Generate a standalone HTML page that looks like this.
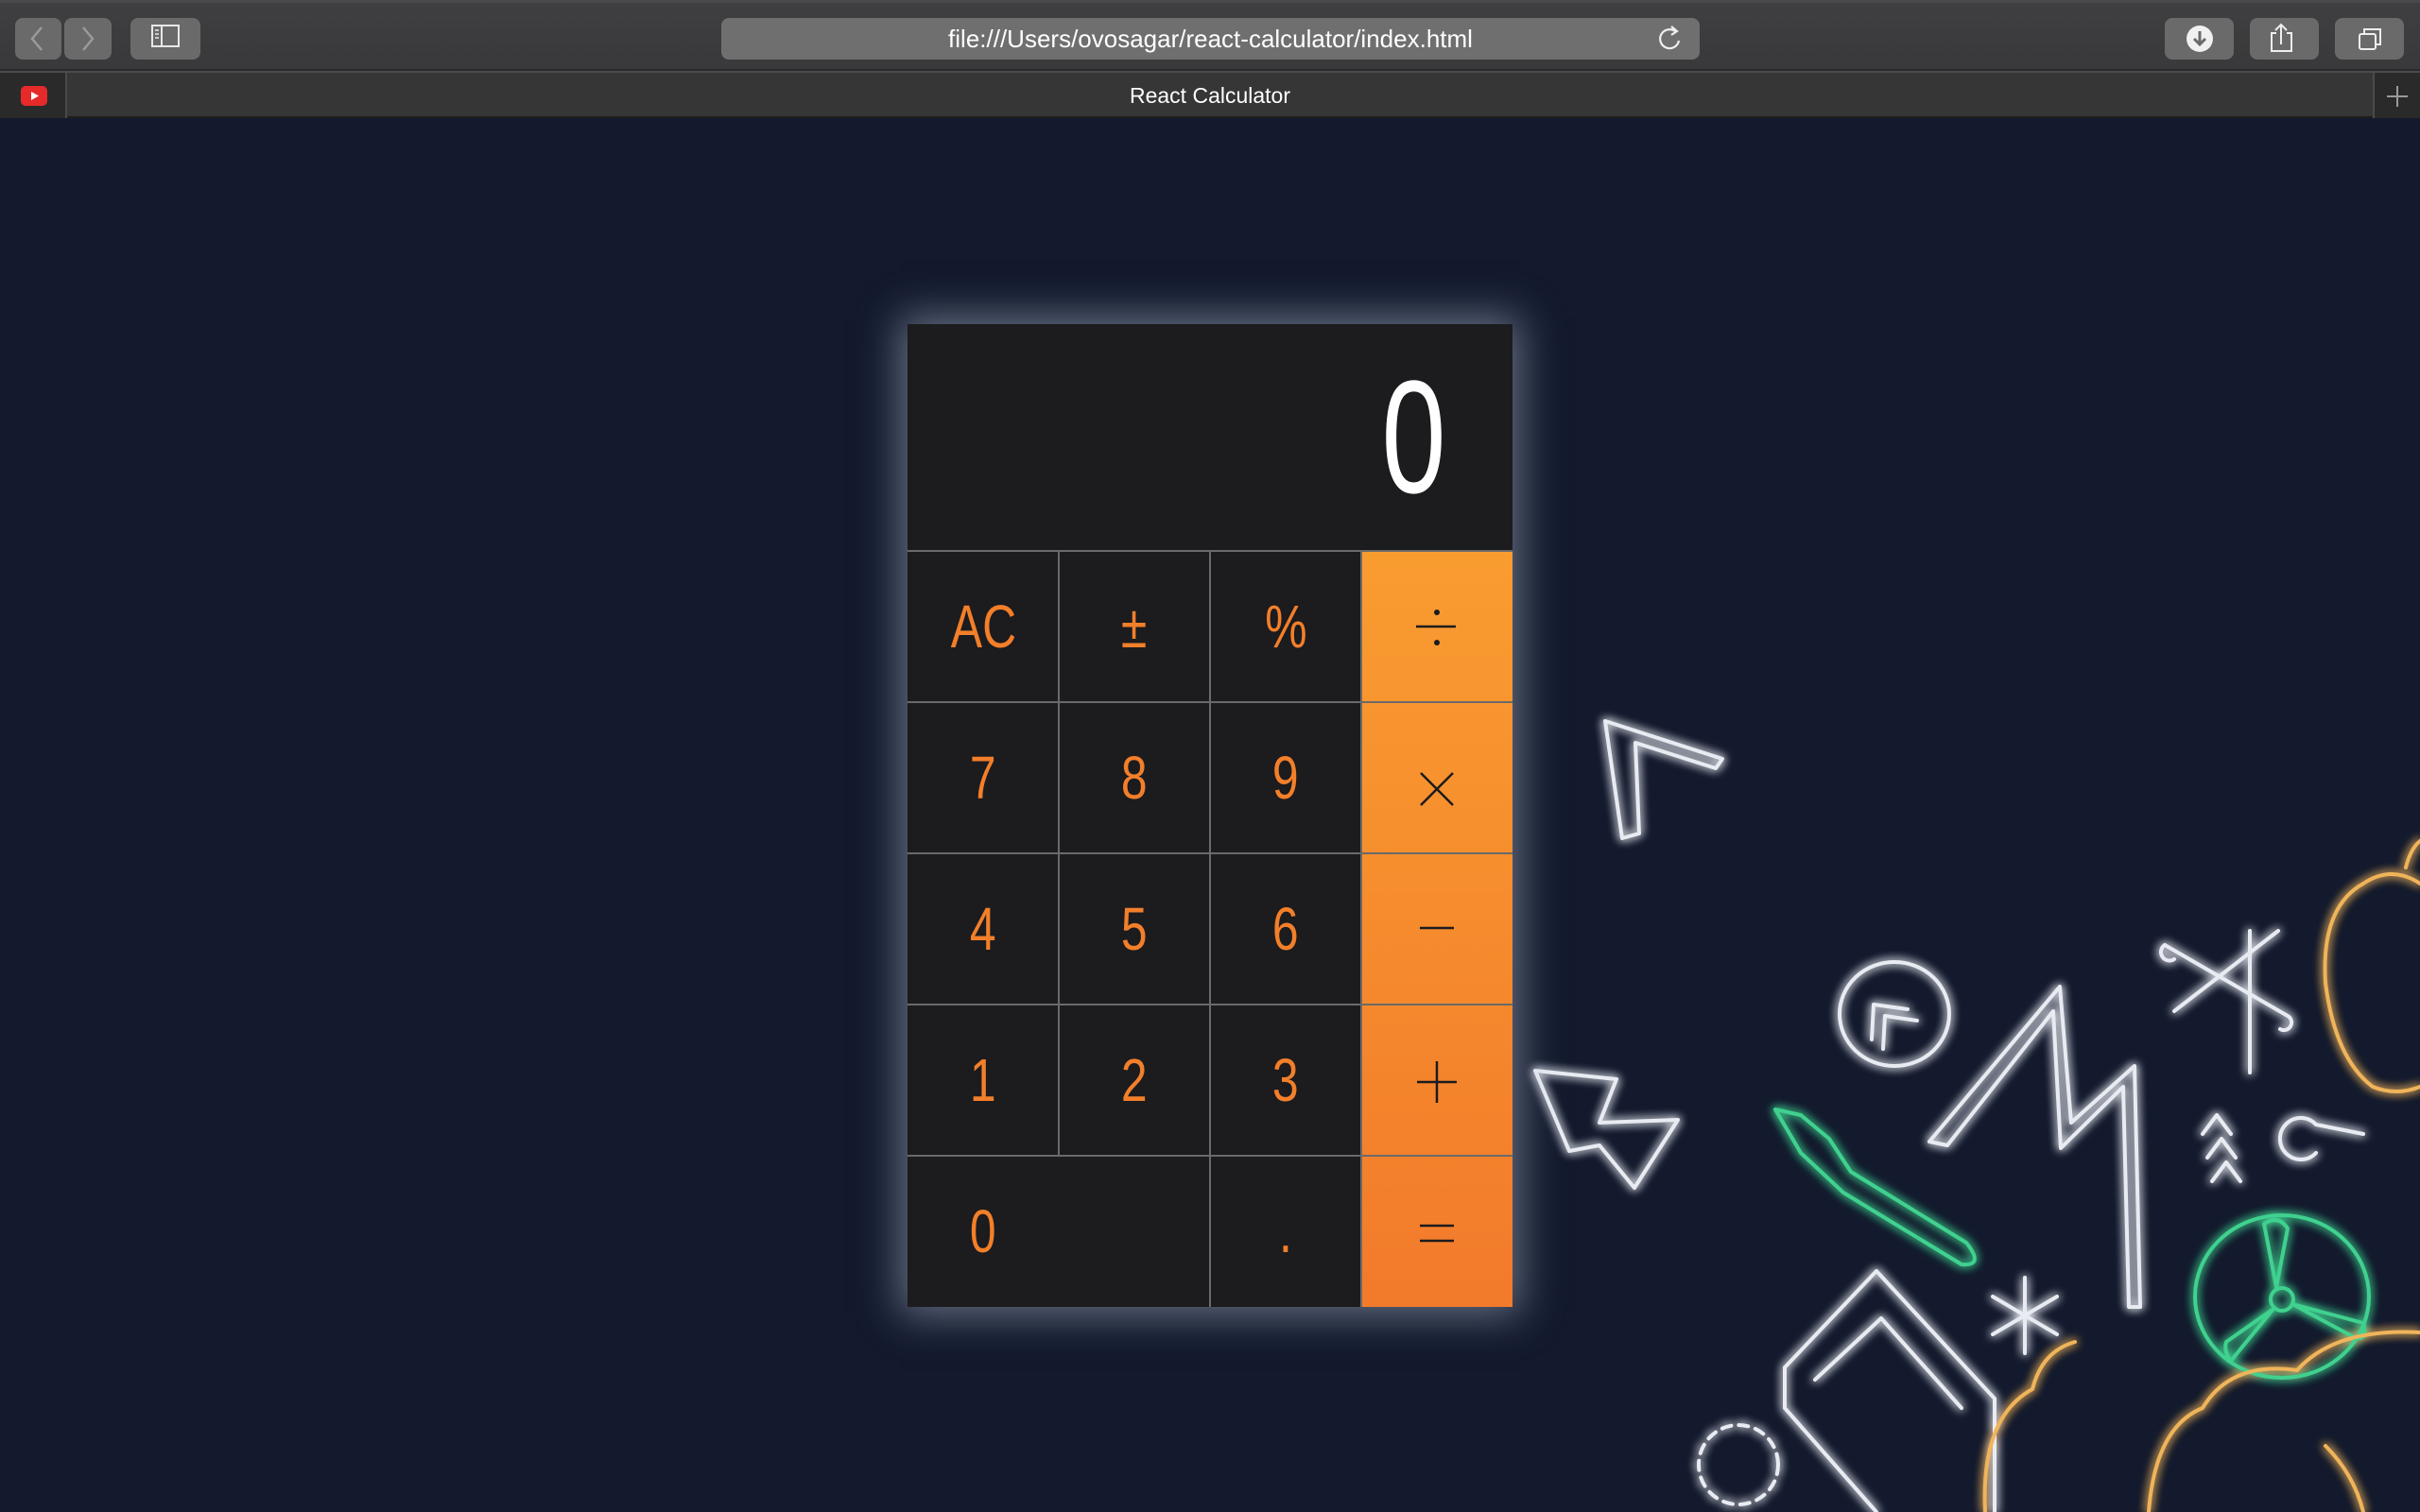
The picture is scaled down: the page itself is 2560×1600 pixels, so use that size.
<!DOCTYPE html>
<html><head><meta charset="utf-8"><style>
*{margin:0;padding:0;box-sizing:border-box}
html,body{width:2560px;height:1600px;overflow:hidden;background:#131a2d;font-family:"Liberation Sans",sans-serif}
.tb{position:absolute;left:0;top:0;width:2560px;height:75px;background:linear-gradient(#3f3f41,#39393b);border-top:3px solid #4a4a4c;border-bottom:2px solid #2a2a2a}
.btn{position:absolute;top:16px;height:44px;background:#6a6a6a;border-radius:8px}
.url{position:absolute;left:763px;top:16px;width:1035px;height:44px;background:#6f6f6f;border-radius:8px;color:#fff;font-size:26px;text-align:center;line-height:44px}
.tabs{position:absolute;left:0;top:75px;width:2560px;height:50px;background:#363637;border-top:2px solid #4c4c4c;border-bottom:2px solid #1e1e1e}
.tabl{position:absolute;left:0;top:0;width:71px;height:48px;background:#2a2a2b;border-right:2px solid #4a4a4a}
.tabr{position:absolute;right:0;top:0;width:50px;height:48px;background:#2a2a2b;border-left:2px solid #4a4a4a}
.title{position:absolute;left:0;width:2560px;top:0;line-height:48px;text-align:center;color:#fff;font-size:23px}
.calc{position:absolute;left:960px;top:343px;width:640px;height:1040px;background:#1c1b1e;box-shadow:0 0 40px 8px rgba(170,180,200,.55)}
.disp{position:absolute;left:0;top:0;width:640px;height:240px;color:#fff;font-size:170px;text-align:right;padding-right:70px;line-height:240px}
.disp span{display:inline-block;transform:scaleX(.72);transform-origin:right center}
.k{position:absolute;width:160px;height:160px;color:#f27f2a;font-size:64px;text-align:center;line-height:160px}
.k span{display:inline-block;transform:scaleX(.78)}
.ops{position:absolute;left:480px;top:240px;width:160px;height:800px;background:linear-gradient(#f99c30,#f27a2b)}
.gl{position:absolute;background:#6a6a6a}
</style></head><body>
<div class="tb">
 <div class="btn" style="left:16px;width:49px"></div>
 <div class="btn" style="left:68px;width:50px"></div>
 <div class="btn" style="left:138px;width:74px"></div>
 <svg style="position:absolute;left:0;top:0" width="260" height="75">
  <path d="M44 26 L34 38 L44 50" stroke="#9a9a9a" stroke-width="2.5" fill="none"/>
  <path d="M88 26 L98 38 L88 50" stroke="#9a9a9a" stroke-width="2.5" fill="none"/>
  <rect x="161" y="24" width="28" height="22" stroke="#e8e8e8" stroke-width="2" fill="none"/>
  <line x1="171" y1="24" x2="171" y2="46" stroke="#e8e8e8" stroke-width="2"/>
  <path d="M164 29h4M164 33h4M164 37h4" stroke="#e8e8e8" stroke-width="1.5"/>
 </svg>
 <div class="url">file:///Users/ovosagar/react-calculator/index.html</div>
 <svg style="position:absolute;left:1752px;top:22px" width="30" height="32"><path d="M20 8 A10 10 0 1 0 24 18" stroke="#eee" stroke-width="2.2" fill="none"/><path d="M16 3 L22 8 L16 12" stroke="#eee" stroke-width="2.2" fill="none"/></svg>
 <div class="btn" style="left:2290px;width:73px"></div>
 <div class="btn" style="left:2380px;width:73px"></div>
 <div class="btn" style="left:2470px;width:73px"></div>
 <svg style="position:absolute;left:2280px;top:0" width="280" height="75">
  <circle cx="47" cy="38" r="14" fill="#f0f0f0"/><path d="M47 30v13M41 38l6 6 6-6" stroke="#6a6a6a" stroke-width="3" fill="none"/>
  <path d="M128 32h-5v19h21v-19h-5M133 24v20M127 29l6-6 6 6" stroke="#eee" stroke-width="2" fill="none"/>
  <rect x="216" y="33" width="17" height="16" rx="2" stroke="#eee" stroke-width="2" fill="none"/>
  <path d="M221 33v-5h17v16h-5" stroke="#eee" stroke-width="2" fill="none"/>
 </svg>
</div>
<div class="tabs">
 <div class="tabl"><svg style="position:absolute;left:22px;top:14px" width="30" height="22"><rect x="0" y="0" width="28" height="21" rx="5" fill="#e62a2a"/><path d="M11 6l8 4.5-8 4.5z" fill="#fff"/></svg></div>
 <div class="title">React Calculator</div>
 <div class="tabr"><svg width="48" height="48"><path d="M24 14v22M13 25h22" stroke="#999" stroke-width="2"/></svg></div>
</div>

<svg style="position:absolute;left:0;top:0" width="2560" height="1600">
 <defs><filter id="g" x="-20%" y="-20%" width="140%" height="140%"><feGaussianBlur stdDeviation="5" result="b"/><feMerge><feMergeNode in="b"/><feMergeNode in="b"/><feMergeNode in="SourceGraphic"/></feMerge></filter></defs>
 <g fill="none" stroke-width="4" stroke-linejoin="round" stroke-linecap="round" filter="url(#g)">
  <g stroke="#e8ecf2">
   <path d="M1716 887 L1698 763 L1822 803 L1815 813 L1730 786 L1734 882 Z"/>
   <path d="M1624 1133 L1710 1142 L1692 1188 L1775 1185 L1729 1257 L1692 1212 L1660 1218 Z"/>
   <ellipse cx="2004" cy="1073" rx="58" ry="55"/>
   <path d="M1980 1100 L1982 1063 L2018 1068 M1992 1110 L1994 1075 L2028 1080"/>
   <path d="M2041 1208 L2179 1044 L2191 1188 L2258 1128 L2264 1383 L2252 1383 L2246 1150 L2180 1215 L2172 1070 L2060 1212 Z"/>
   <path d="M2142 1352 L2142 1432 M2108 1372 L2176 1412 M2108 1412 L2176 1372"/>
   <path d="M1888 1447 L1985 1345 L2110 1480 L2110 1600 M1920 1460 L1990 1395 L2075 1490 M1888 1447 L1888 1490 L1985 1600"/>
   <path d="M2290 1000 L2420 1075 M2300 1070 L2410 985 M2380 985 L2380 1135 M2290 1000 a8 8 0 1 0 10 15 M2420 1075 a8 8 0 1 1 -8 14"/>
   <path d="M2330 1200 l15 -20 l15 20 M2335 1225 l15 -20 l15 20 M2340 1250 l15 -20 l15 20"/>
   <path d="M2450 1220 a22 22 0 1 1 0 -30 L2500 1200"/>
   <g stroke-dasharray="10 8"><circle cx="1839" cy="1550" r="42"/></g>
  </g>
  <g stroke="#3fd18f">
   <path d="M1878 1174 L1905 1180 L1935 1205 L1958 1240 L2080 1315 Q2100 1340 2075 1338 L1950 1262 L1905 1220 Z"/>
   <ellipse cx="2414" cy="1372" rx="92" ry="86"/>
   <circle cx="2414" cy="1375" r="12"/>
   <path d="M2408 1362 L2395 1295 Q2410 1285 2420 1300 Z M2425 1380 L2500 1400 Q2505 1420 2490 1415 Z M2405 1385 L2360 1440 Q2352 1430 2355 1420 Z"/>
  </g>
  <g stroke="#f0b45a">
   <path d="M2560 935 Q2530 915 2500 935 Q2455 960 2460 1040 Q2470 1120 2510 1150 Q2535 1160 2560 1150"/>
   <path d="M2545 918 Q2550 898 2560 890"/>
   <path d="M2100 1600 Q2095 1500 2150 1470 Q2160 1430 2195 1420 M2273 1600 Q2280 1510 2330 1490 Q2360 1440 2430 1450 Q2470 1405 2560 1410"/>
   <path d="M2460 1530 Q2490 1560 2500 1600"/>
  </g>
 </g>
</svg>

<div class="calc">
 <div class="disp"><span>0</span></div>
 <div class="ops"></div>
 <div class="gl" style="left:0;top:239px;width:640px;height:2px"></div>
 <div class="gl" style="left:0;top:399px;width:640px;height:2px"></div>
 <div class="gl" style="left:0;top:559px;width:640px;height:2px"></div>
 <div class="gl" style="left:0;top:719px;width:640px;height:2px"></div>
 <div class="gl" style="left:0;top:879px;width:640px;height:2px"></div>
 <div class="gl" style="left:159px;top:240px;width:2px;height:640px"></div>
 <div class="gl" style="left:319px;top:240px;width:2px;height:800px"></div>
 <div class="gl" style="left:479px;top:240px;width:2px;height:800px"></div>

 <div class="k" style="left:0;top:240px"><span>AC</span></div>
 <div class="k" style="left:160px;top:240px"><span>±</span></div>
 <div class="k" style="left:320px;top:240px"><span>%</span></div>
 <div class="k" style="left:0;top:400px"><span>7</span></div>
 <div class="k" style="left:160px;top:400px"><span>8</span></div>
 <div class="k" style="left:320px;top:400px"><span>9</span></div>
 <div class="k" style="left:0;top:560px"><span>4</span></div>
 <div class="k" style="left:160px;top:560px"><span>5</span></div>
 <div class="k" style="left:320px;top:560px"><span>6</span></div>
 <div class="k" style="left:0;top:720px"><span>1</span></div>
 <div class="k" style="left:160px;top:720px"><span>2</span></div>
 <div class="k" style="left:320px;top:720px"><span>3</span></div>
 <div class="k" style="left:0;top:880px"><span>0</span></div>
 <div class="k" style="left:320px;top:880px"><span>.</span></div>

 <svg style="position:absolute;left:480px;top:240px" width="160" height="800">
  <g stroke="#1c1b1e" stroke-width="2.5" fill="none">
   <line x1="58" y1="80" x2="100" y2="80"/>
   <line x1="63" y1="235" x2="97" y2="269"/><line x1="97" y1="235" x2="63" y2="269"/>
   <line x1="62" y1="399" x2="98" y2="399"/>
   <line x1="59" y1="562" x2="101" y2="562"/><line x1="80" y1="540" x2="80" y2="584"/>
   <line x1="62" y1="714" x2="98" y2="714"/><line x1="62" y1="730" x2="98" y2="730"/>
  </g>
  <circle cx="80" cy="65" r="3" fill="#1c1b1e"/><circle cx="80" cy="97" r="3" fill="#1c1b1e"/>
 </svg>
</div>
</body></html>
